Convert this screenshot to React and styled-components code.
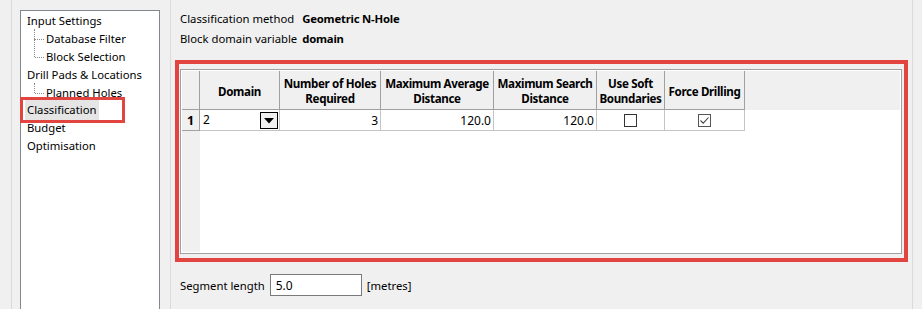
import React from "react";
import styled, { createGlobalStyle } from "styled-components";

const GlobalStyle = createGlobalStyle`
  html, body {
    margin: 0;
    padding: 0;
    background: #f0f0f0;
    font-family: "Noto Sans", "Open Sans", sans-serif;
    font-size: 11.3px;
    color: #000;
  }
`;

const Window = styled.div`
  display: flex;
  height: 309px;
  overflow: hidden;
  background: #f0f0f0;
`;

const LeftPane = styled.div`
  display: flex;
  flex-direction: column;
  width: 160px;
  box-sizing: border-box;
  margin-left: 11px;
  padding: 10px 10px 0 8px;
  border-left: 1px solid #dadada;
  border-right: 1px solid #dadada;
`;

const Tree = styled.ul`
  flex: 1;
  margin: 0;
  padding: 1px 0 0 0;
  list-style: none;
  background: #fff;
  border: 1px solid #828790;
  border-bottom: none;
`;

const TreeItem = styled.li`
  position: relative;
  height: 17.9px;
  line-height: 18px;
  padding-left: ${(p) => (p.$child ? 25 : 6)}px;
  white-space: nowrap;

  ${(p) =>
    p.$child &&
    `
    &::before {
      content: "";
      position: absolute;
      left: 13px;
      top: ${p.$first ? -1 : -9}px;
      height: ${p.$first ? 10 : 18}px;
      border-left: 1px dotted #8a8a8a;
    }
    &::after {
      content: "";
      position: absolute;
      left: 14px;
      top: 9px;
      width: 9px;
      border-top: 1px dotted #8a8a8a;
    }
  `}
`;

const Selected = styled.span`
  display: inline-block;
  margin-left: -4px;
  width: 99px;
  height: 20px;
  margin-top: -1px;
  vertical-align: top;
  outline: 3px solid #e2443f;
  line-height: 20px;
`;

const SelectedLabel = styled.span`
  display: inline-block;
  margin-left: 2px;
  padding: 0 2px;
  background: #e5e5e5;
`;

const RightPane = styled.div`
  flex: 1;
  display: flex;
  flex-direction: column;
  box-sizing: border-box;
  margin-right: 9px;
  padding: 8px 4px 0 4px;
  border-right: 1px solid #dadada;
`;

const InfoGrid = styled.div`
  display: grid;
  grid-template-columns: auto 1fr;
  grid-auto-rows: 20px;
  column-gap: 5px;
  align-items: center;
  padding-left: 5px;
  margin-bottom: 12px;
`;

const InfoValue = styled.span`
  font-weight: bold;
  letter-spacing: -0.2px;
`;

const Annotation = styled.div`
  border: 4px solid #e2443f;
  padding: 5px 2px 4px 1px;
`;

const Table = styled.div`
  display: grid;
  grid-template-columns: 18px 80px 101px 113px 103px 68px 80px 1fr;
  grid-template-rows: 39px 21px 1fr;
  height: 185px;
  box-sizing: border-box;
  border: 1px solid #a0a0a0;
  padding: 1px;
  background: #fff;
`;

const HeadCell = styled.div`
  display: flex;
  align-items: center;
  justify-content: center;
  text-align: center;
  box-sizing: border-box;
  background: #f0f0f0;
  font-weight: bold;
  font-size: 11.6px;
  letter-spacing: -0.35px;
  white-space: nowrap;
  line-height: 15px;
  padding-top: 2px;
  border-right: ${(p) => (p.$plain ? "none" : "1px solid #a0a0a0")};
  border-bottom: ${(p) => (p.$plain ? "none" : "1px solid #a0a0a0")};
`;

const RowNum = styled.div`
  display: flex;
  align-items: center;
  justify-content: center;
  box-sizing: border-box;
  background: #f0f0f0;
  font-weight: bold;
  font-size: 12.5px;
  border-right: 1px solid #a0a0a0;
  border-bottom: 1px solid #a0a0a0;
`;

const RowNumFill = styled.div`
  background: #f0f0f0;
`;

const Cell = styled.div`
  display: flex;
  align-items: center;
  justify-content: ${(p) => p.$align || "flex-start"};
  box-sizing: border-box;
  padding: 0 2px;
  border-right: 1px solid #c4c4c4;
  border-bottom: 1px solid #c4c4c4;
  font-size: 12px;
`;

const ComboCell = styled(Cell)`
  justify-content: space-between;
  align-items: flex-end;
  padding: 0 1px 1px 3px;
`;

const ComboText = styled.span`
  align-self: center;
`;

const ComboButton = styled.div`
  display: flex;
  align-items: center;
  justify-content: center;
  width: 18px;
  height: 17px;
  box-sizing: border-box;
  border: 1px solid #000;
  background: #f0f0f0;
`;

const Check = styled.div`
  display: flex;
  align-items: center;
  justify-content: center;
  width: 13px;
  height: 13px;
  box-sizing: border-box;
  border: 1px solid ${(p) => (p.$checked ? "#555" : "#333")};
  background: #fff;
`;

const Empty = styled.div``;

const SegmentRow = styled.div`
  display: flex;
  align-items: center;
  gap: 5px;
  margin-top: 12px;
  padding-left: 5px;
`;

const TextInput = styled.input`
  width: 92px;
  height: 22px;
  box-sizing: border-box;
  border: 1px solid #7a7a7a;
  padding: 0 5px;
  font: inherit;
  font-size: 12px;
  background: #fff;
  outline: none;
`;

const treeItems = [
  { label: "Input Settings" },
  { label: "Database Filter", child: true, first: true },
  { label: "Block Selection", child: true },
  { label: "Drill Pads & Locations" },
  { label: "Planned Holes", child: true, first: true },
  { label: "Classification", selected: true },
  { label: "Budget" },
  { label: "Optimisation" },
];

const headers = [
  "Domain",
  "Number of Holes\nRequired",
  "Maximum Average\nDistance",
  "Maximum Search\nDistance",
  "Use Soft\nBoundaries",
  "Force Drilling",
];

const ArrowDown = () => (
  <svg width="10" height="6" viewBox="0 0 10 6">
    <path d="M0 0 H10 L5 5.5 Z" fill="#000" />
  </svg>
);

const Tick = () => (
  <svg width="11" height="11" viewBox="0 0 11 11">
    <path d="M1.5 5.5 L4.2 8.2 L9.5 2.5" fill="none" stroke="#444" strokeWidth="1.1" />
  </svg>
);

export default function App() {
  return (
    <>
      <GlobalStyle />
      <Window>
        <LeftPane>
          <Tree>
            {treeItems.map((item) => (
              <TreeItem key={item.label} $child={item.child} $first={item.first}>
                {item.selected ? (
                  <Selected>
                    <SelectedLabel>{item.label}</SelectedLabel>
                  </Selected>
                ) : (
                  item.label
                )}
              </TreeItem>
            ))}
          </Tree>
        </LeftPane>

        <RightPane>
          <InfoGrid>
            <span>Classification method</span>
            <InfoValue>Geometric N-Hole</InfoValue>
            <span>Block domain variable</span>
            <InfoValue>domain</InfoValue>
          </InfoGrid>

          <Annotation>
            <Table>
              <HeadCell />
              {headers.map((h) => (
                <HeadCell key={h}>
                  <span>
                    {h.split("\n").map((line, i) => (
                      <React.Fragment key={line}>
                        {i > 0 && <br />}
                        {line}
                      </React.Fragment>
                    ))}
                  </span>
                </HeadCell>
              ))}
              <HeadCell $plain />

              <RowNum>1</RowNum>
              <ComboCell>
                <ComboText>2</ComboText>
                <ComboButton>
                  <ArrowDown />
                </ComboButton>
              </ComboCell>
              <Cell $align="flex-end">3</Cell>
              <Cell $align="flex-end">120.0</Cell>
              <Cell $align="flex-end">120.0</Cell>
              <Cell $align="center">
                <Check />
              </Cell>
              <Cell $align="center">
                <Check $checked>
                  <Tick />
                </Check>
              </Cell>
              <Empty />

              <RowNumFill />
            </Table>
          </Annotation>

          <SegmentRow>
            <span>Segment length</span>
            <TextInput defaultValue="5.0" />
            <span>[metres]</span>
          </SegmentRow>
        </RightPane>
      </Window>
    </>
  );
}
